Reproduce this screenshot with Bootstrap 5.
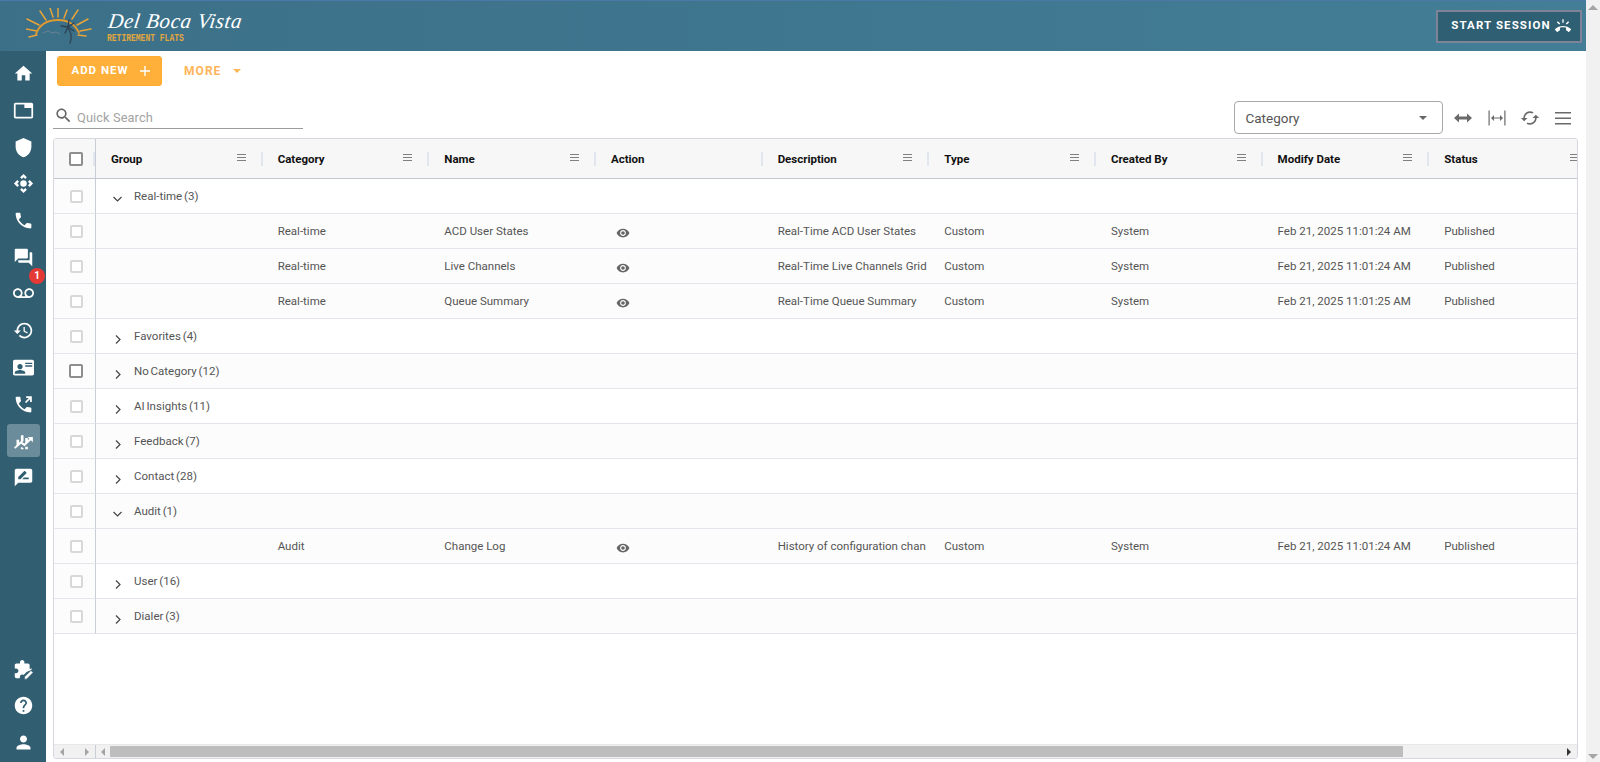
<!DOCTYPE html>
<html lang="en">
<head>
<meta charset="utf-8">
<title>Del Boca Vista</title>
<link href="https://cdn.jsdelivr.net/npm/bootstrap@5.3.0/dist/css/bootstrap.min.css" rel="stylesheet">
<style>
html,body{height:100%;overflow:hidden}
body{font-family:Roboto,"Liberation Sans",sans-serif;font-size:11.5px;color:#555;background:#fff}
.shell{height:762px}
.main-col{width:1586px}
.topbar{height:51px;background:linear-gradient(90deg,#3b7088,#437d96);border-top:1px solid #4a78a8;padding:0 4px 0 26px}
.logo-sun{width:66px;height:36px}
.logo-text{margin-left:15px;color:#fff;line-height:1}
.logo-name{font:italic 21px/20px "Liberation Serif",serif;letter-spacing:.6px;white-space:nowrap;transform:skewX(-8deg);transform-origin:left bottom}
.logo-sub{font:bold 8px/8px "Liberation Mono",monospace;color:#e0a640;text-transform:uppercase;margin-top:3px;transform:scaleY(1.3)}
.start-btn{width:146px;height:33px;background:#2f5f72;border:2px solid #7f8397;border-radius:0;color:#fff;font-weight:700;font-size:11.5px;letter-spacing:1.1px;padding:0 0 0 4px;gap:4px}
.start-btn:hover{background:#2f5f72;color:#fff;border-color:#7f8397}
.side{width:46px;background:#315e70;padding-top:4.5px}
.side-item{width:33px;height:33px;margin:1.85px 7px;border-radius:3px;color:#fff}
.side-item svg{width:21px;height:21px;fill:#fff}
.side-item.on{background:#6b8d9b}
.side-item.last{margin-bottom:3px}
.red-dot{position:absolute;top:-9px;right:-5px;width:16px;height:16px;border-radius:50%;background:#e53935;color:#fff;font-size:10px;font-weight:700;line-height:16px;text-align:center}
.content{padding:5px 8px 3px 7px;min-width:0}
.add-btn{width:105px;height:30px;margin-left:4px;background:#ffb03b;border:1px solid #ffab30;border-radius:3px;color:#fff;font-weight:700;font-size:11.5px;letter-spacing:1px;padding:0 0 0 2px;gap:11px}
.add-btn:hover{background:#ffb03b;color:#fff;border-color:#ffab30}
.more-btn{margin-left:22px;color:#ffb55a;font-weight:700;font-size:12px;letter-spacing:1.05px;gap:12px}
.caret-d{width:0;height:0;border-left:4px solid transparent;border-right:4px solid transparent;border-top:4px solid currentColor}
.tool-row{height:33px;margin-top:15px;margin-bottom:4px}
.search-box{width:250px;height:28px;border-bottom:1px solid #9c9c9c;padding:6px 0 0 1px;gap:4px;align-self:flex-start}
.search-box svg{width:19px;height:19px;fill:#666;flex-shrink:0;margin-top:-4px}
.search-box input{border:0;outline:0;width:200px;padding:0;font-size:12.8px;color:#555;background:transparent;letter-spacing:.1px}
.search-box input::placeholder{color:#a3a3a3;opacity:1}
.cat-select{width:209px;height:33px;border:1px solid #a8a8a8;border-radius:4px;padding:2px 15px 0 10px;font-size:13.5px;color:#555;background:#fff}
.cat-select .caret-d{color:#666;margin-top:-2px}
.tool-icons{margin-left:3px;margin-right:-2px}
.tool-i{width:33.4px;height:24px;color:#6a6a6a}
.tool-i svg{width:20px;height:20px}
.grid-box{border:1px solid #d5d8de;border-radius:3px;min-height:0;background:#fff}
.grid-scroll{overflow:hidden;min-height:0}
.grid-table{table-layout:fixed;width:1542px;margin:0;color:#555;font-size:11.5px;border-collapse:separate;border-spacing:0}
.grid-table th,.grid-table td{height:35px;padding:2px 15px 0;border-bottom:1px solid #e4e6ec;background:#fff;box-shadow:none;white-space:nowrap;overflow:hidden;vertical-align:middle;text-overflow:clip;color:#555}
.grid-table thead th{height:40px;background:#f7f7f7;border-bottom:1px solid #c3c7d1;color:#111;font-weight:700;position:relative;font-size:11.5px;padding-top:2px}
.grid-table th:first-child,.grid-table td:first-child{padding:2px 0 0 3px;text-align:center;border-right:1px solid #c9cdd6}
.grid-table tr.shade td{background:#fcfcfc}
.grid-table tbody td:first-child{background:#fcfcfc}
.grp-cell{word-spacing:-1px}
.hd-menu{position:absolute;right:17px;top:15px;width:9px;height:7px;border-top:1px solid #808080;border-bottom:1px solid #808080}
.hd-menu::after{content:"";position:absolute;left:0;right:0;top:2px;border-top:1px solid #808080}
.grid-table thead th::after{content:"";position:absolute;right:0;top:13px;height:14px;border-right:2px solid #e2e6ee}
.box{display:inline-block;width:13px;height:13px;border:2px solid #d8d8d8;border-radius:2px;background:#fff;vertical-align:middle;margin-top:-2px}
.box.dark{border-color:#8e8e8e;width:14px;height:14px}
.chev{display:inline-block;width:9px;height:6px;margin:4px 12px 0 2px;vertical-align:middle}
.chev.side-c{width:6px;height:9px;margin:4px 13px 0 4px}
.chev path{fill:none;stroke:#444;stroke-width:1.2}
.eye{width:14px;height:14px;fill:#666;margin-left:5px;margin-top:1px}
.hbar{height:14px;background:#f1f1f1;border-top:1px solid #e8e8e8}
.hbar-pin{width:42px;border-right:1px solid #c9cdd6;padding:0 6px}
.arr{width:0;height:0;border-top:4px solid transparent;border-bottom:4px solid transparent}
.arr.l{border-right:4px solid #a5a5a5}
.arr.r{border-left:4px solid #a5a5a5}
.arr.rd{border-left:4px solid #333}
.hbar-track{padding:0 6px 0 5px}
.thumb{width:1293px;height:11px;margin-left:5px;background:#bdbdbd}
.vbar{width:14px;background:#f1f1f1;padding:5px 0 3px}
.arr-u{width:0;height:0;border-left:5px solid transparent;border-right:5px solid transparent;border-bottom:5px solid #a5a5a5}
.arr-d{width:0;height:0;border-left:5px solid transparent;border-right:5px solid transparent;border-top:5px solid #a5a5a5}
</style>
</head>
<body>
<svg width="0" height="0" class="position-absolute">
<defs>
<symbol id="i-home" viewBox="0 0 24 24"><path d="M10 20v-6h4v6h5v-8h3L12 3 2 12h3v8z"/></symbol>
<symbol id="i-tab" viewBox="0 0 24 24"><path d="M21 3H3c-1.1 0-2 .9-2 2v14c0 1.1.9 2 2 2h18c1.1 0 2-.9 2-2V5c0-1.1-.9-2-2-2zm0 16H3V5h10v4h8v10z"/></symbol>
<symbol id="i-shield" viewBox="0 0 24 24"><path d="M12 1L3 5v6c0 5.55 3.84 10.74 9 12 5.16-1.26 9-6.45 9-12V5l-9-4z"/></symbol>
<symbol id="i-cam" viewBox="1 1 22 22"><path d="M15.54 5.54L13.77 7.3 12 5.54 10.23 7.3 8.46 5.54 12 2zm2.92 10l-1.76-1.77L18.46 12l-1.76-1.77 1.76-1.77L22 12zm-10 2.92l1.77-1.76L12 18.46l1.77-1.76 1.77 1.76L12 22zm-2.92-10l1.76 1.77L5.54 12l1.76 1.77-1.76 1.77L2 12z"/><circle cx="12" cy="12" r="3.400"/></symbol>
<symbol id="i-phone" viewBox="0 0 24 24"><path d="M6.62 10.79c1.44 2.83 3.76 5.14 6.59 6.59l2.2-2.2c.27-.27.67-.36 1.02-.24 1.12.37 2.33.57 3.57.57.55 0 1 .45 1 1V20c0 .55-.45 1-1 1-9.39 0-17-7.61-17-17 0-.55.45-1 1-1h3.5c.55 0 1 .45 1 1 0 1.25.2 2.45.57 3.57.11.35.03.74-.25 1.02l-2.2 2.2z"/></symbol>
<symbol id="i-forum" viewBox="0 0 24 24"><path d="M21 6h-2v9H6v2c0 .55.45 1 1 1h11l4 4V7c0-.55-.45-1-1-1zm-4 6V3c0-.55-.45-1-1-1H3c-.55 0-1 .45-1 1v14l4-4h10c.55 0 1-.45 1-1z"/></symbol>
<symbol id="i-vm" viewBox="0 0 24 24"><path d="M18.5 6C15.46 6 13 8.46 13 11.5c0 1.33.47 2.55 1.26 3.5H9.74c.79-.95 1.26-2.17 1.26-3.5C11 8.46 8.54 6 5.5 6S0 8.46 0 11.5 2.46 17 5.5 17h13c3.04 0 5.5-2.46 5.5-5.5S21.54 6 18.5 6zm-13 9C3.57 15 2 13.43 2 11.5S3.57 8 5.5 8 9 9.57 9 11.5 7.43 15 5.5 15zm13 0c-1.93 0-3.5-1.57-3.5-3.5S16.57 8 18.5 8 22 9.57 22 11.5 20.43 15 18.5 15z"/></symbol>
<symbol id="i-hist" viewBox="0 0 24 24"><path d="M13 3c-4.97 0-9 4.03-9 9H1l3.89 3.89.07.14L9 12H6c0-3.87 3.13-7 7-7s7 3.13 7 7-3.13 7-7 7c-1.93 0-3.68-.79-4.94-2.06l-1.42 1.42C8.27 19.99 10.51 21 13 21c4.97 0 9-4.03 9-9s-4.03-9-9-9zm-1 5v5l4.28 2.54.72-1.21-3.5-2.08V8H12z"/></symbol>
<symbol id="i-card" viewBox="0 0 24 24"><path d="M22 3H2C.9 3 0 3.9 0 5v14c0 1.1.9 2 2 2h20c1.1 0 2-.9 2-2V5c0-1.1-.9-2-2-2zM8 8c1.66 0 3 1.34 3 3s-1.34 3-3 3-3-1.34-3-3 1.34-3 3-3zm6 11H2v-1c0-2 4-3.1 6-3.1s6 1.1 6 3.1v1zm8-11h-8V6.500h8V8zm0 3h-8V9.500h8V11z"/></symbol>
<symbol id="i-fwd" viewBox="0 0 24 24"><path d="M6.62 10.79c1.44 2.83 3.76 5.14 6.59 6.59l2.2-2.2c.27-.27.67-.36 1.02-.24 1.12.37 2.33.57 3.57.57.55 0 1 .45 1 1V20c0 .55-.45 1-1 1-9.39 0-17-7.61-17-17 0-.55.45-1 1-1h3.5c.55 0 1 .45 1 1 0 1.25.2 2.45.57 3.57.11.35.03.74-.25 1.02l-2.2 2.2z"/><path d="M15 2.500h6.500V9h-2V5.900l-4.500 4.500-1.400-1.400 4.500-4.500H15z"/></symbol>
<symbol id="i-chart" viewBox="0 0 24 24"><path d="M4 11h3v3.500l-3 3zM9 6h3v6.500l-3 3zM14 9h3v3.800l-3 2.900zM2.500 21.500l-1.300-1.400 7.800-7.600 4 3 5.700-5.600-2-1.900h6v6l-2.300-2.400-7.200 7-4-3zM9 19.500l3 1v1.500H9zM14 19h3v3h-3z"/></symbol>
<symbol id="i-rate" viewBox="0 0 24 24"><path d="M20 2H4c-1.100 0-2 .9-2 2v18l4-4h14c1.100 0 2-.9 2-2V4c0-1.100-.9-2-2-2zM6 14v-2.470l6.880-6.880c.2-.2.510-.2.710 0l1.770 1.770c.2.2.2.510 0 .710L8.470 14H6zm12 0h-7.500l2-2H18v2z"/></symbol>
<symbol id="i-ext" viewBox="0 0 24 24"><path d="M20.500 11H19V7c0-1.100-.9-2-2-2h-4V3.500C13 2.120 11.880 1 10.500 1S8 2.120 8 3.500V5H4c-1.100 0-1.990.9-1.990 2v3.800H3.500c1.490 0 2.700 1.210 2.700 2.700s-1.210 2.700-2.700 2.700H2V20c0 1.100.9 2 2 2h3.800v-1.500c0-1.490 1.210-2.700 2.700-2.700.6 0 1.100.2 1.600.5l3.400-3.400 3-1.400c1.300-.1 3-1 3-2.700S21.880 11 20.500 11z"/><path d="M13 23v-2.500l7.500-7.500 2.500 2.500L15.500 23z" stroke="#315e70" stroke-width=".8"/></symbol>
<symbol id="i-help" viewBox="0 0 24 24"><path d="M12 2C6.480 2 2 6.480 2 12s4.480 10 10 10 10-4.480 10-10S17.520 2 12 2zm1 17h-2v-2h2v2zm2.070-7.750l-.9.920C13.450 12.900 13 13.500 13 15h-2v-.5c0-1.100.450-2.100 1.170-2.830l1.240-1.260c.37-.36.590-.86.590-1.410 0-1.100-.9-2-2-2s-2 .9-2 2H8c0-2.210 1.790-4 4-4s4 1.790 4 4c0 .88-.36 1.680-.93 2.250z"/></symbol>
<symbol id="i-user" viewBox="0 0 24 24"><path d="M12 12c2.210 0 4-1.790 4-4s-1.790-4-4-4-4 1.790-4 4 1.790 4 4 4zm0 2c-2.670 0-8 1.340-8 4v2h16v-2c0-2.660-5.330-4-8-4z"/></symbol>
<symbol id="i-eye" viewBox="0 0 24 24"><path d="M12 4.500C7 4.500 2.730 7.610 1 12c1.730 4.390 6 7.500 11 7.500s9.270-3.110 11-7.500c-1.730-4.390-6-7.500-11-7.500zM12 17c-2.760 0-5-2.240-5-5s2.240-5 5-5 5 2.240 5 5-2.240 5-5 5zm0-8c-1.660 0-3 1.340-3 3s1.340 3 3 3 3-1.340 3-3-1.340-3-3-3z"/></symbol>
<symbol id="i-search" viewBox="0 0 24 24"><path d="M15.500 14h-.79l-.28-.27C15.410 12.590 16 11.110 16 9.500 16 5.910 13.090 3 9.500 3S3 5.910 3 9.500 5.910 16 9.500 16c1.610 0 3.090-.59 4.230-1.570l.27.28v.79l5 4.990L20.490 19l-4.990-5zm-6 0C7.010 14 5 11.990 5 9.500S7.010 5 9.500 5 14 7.010 14 9.500 11.990 14 9.500 14z"/></symbol>
</defs>
</svg>

<div class="shell d-flex">
  <div class="main-col d-flex flex-column">
    <header class="topbar d-flex align-items-center justify-content-between flex-shrink-0">
      <div class="d-flex align-items-center">
        <svg class="logo-sun" viewBox="0 0 66 36" fill="none" stroke-linecap="round">
          <g stroke="#e8a33a" stroke-width="1.500">
            <path d="M0 21l11 2M1 11l12 6M14 3l6 9M24 0l3 9"/><path d="M32 0v9M41 2l-3 8M52 2l-6 9M62 11l-11 6M65 21l-11 2"/>
            <path d="M10 26c4-11 13-14 22-14s17 4 21 13" stroke="#e09a30" stroke-width="1.800"/>
            <path d="M52 27l8 1" /><path d="M3 29l8-2" />
          </g>
          <path d="M44 35c2-5 1-11-2-15" stroke="#33495a" stroke-width="1.500"/>
          <path d="M42 19l-7-1M42 19l-3 6M42 19l6-4M42 19l6 4M42 19l1-7" stroke="#2c4252" stroke-width="1.300"/>
          <path d="M17 25l5-2 4 2 4-1 4 2" stroke="#6a8493" stroke-width="1"/>
        </svg>
        <div class="logo-text">
          <div class="logo-name">Del Boca Vista</div>
          <div class="logo-sub">Retirement Flats</div>
        </div>
      </div>
      <button class="btn start-btn d-flex align-items-center justify-content-center" type="button">START SESSION
        <svg width="16" height="16" viewBox="0 0 24 24" fill="#fff"><path d="M23.710 16.670C20.660 13.780 16.540 12 12 12 7.460 12 3.340 13.780.29 16.670c-.18.18-.29.43-.29.71 0 .28.110.530.29.710l2.480 2.480c.18.18.43.29.71.29.27 0 .52-.11.7-.28.79-.74 1.690-1.360 2.660-1.850.33-.16.56-.5.56-.9v-3.100c1.450-.48 3-.73 4.600-.73s3.150.25 4.600.72v3.100c0 .39.23.74.56.9.98.49 1.870 1.120 2.670 1.850.18.18.43.28.7.28.28 0 .53-.11.71-.29l2.480-2.480c.18-.18.29-.43.29-.71 0-.28-.12-.52-.3-.7zM21.160 6.260l-1.410-1.410-3.560 3.550 1.410 1.410s3.450-3.520 3.560-3.550zM13 2h-2v5h2V2zM6.400 9.810L7.810 8.400 4.260 4.840 2.840 6.260c.11.03 3.560 3.550 3.560 3.550z"/></svg>
      </button>
    </header>
    <div class="d-flex flex-grow-1" style="min-height:0">
      <nav class="side d-flex flex-column flex-shrink-0">
        <a class="side-item d-flex align-items-center justify-content-center"><svg><use href="#i-home"/></svg></a>
        <a class="side-item d-flex align-items-center justify-content-center"><svg><use href="#i-tab"/></svg></a>
        <a class="side-item d-flex align-items-center justify-content-center"><svg><use href="#i-shield"/></svg></a>
        <a class="side-item d-flex align-items-center justify-content-center"><svg><use href="#i-cam"/></svg></a>
        <a class="side-item d-flex align-items-center justify-content-center"><svg><use href="#i-phone"/></svg></a>
        <a class="side-item d-flex align-items-center justify-content-center"><svg><use href="#i-forum"/></svg></a>
        <a class="side-item d-flex align-items-center justify-content-center position-relative"><svg><use href="#i-vm"/></svg><span class="red-dot">1</span></a>
        <a class="side-item d-flex align-items-center justify-content-center"><svg><use href="#i-hist"/></svg></a>
        <a class="side-item d-flex align-items-center justify-content-center"><svg><use href="#i-card"/></svg></a>
        <a class="side-item d-flex align-items-center justify-content-center"><svg><use href="#i-fwd"/></svg></a>
        <a class="side-item on d-flex align-items-center justify-content-center"><svg><use href="#i-chart"/></svg></a>
        <a class="side-item d-flex align-items-center justify-content-center"><svg><use href="#i-rate"/></svg></a>
        <a class="side-item d-flex align-items-center justify-content-center mt-auto"><svg><use href="#i-ext"/></svg></a>
        <a class="side-item d-flex align-items-center justify-content-center"><svg><use href="#i-help"/></svg></a>
        <a class="side-item last d-flex align-items-center justify-content-center"><svg><use href="#i-user"/></svg></a>
      </nav>
      <main class="content d-flex flex-column flex-grow-1">
        <div class="d-flex align-items-center flex-shrink-0">
          <button class="btn add-btn d-flex align-items-center justify-content-center" type="button">ADD NEW
            <svg width="10" height="10" viewBox="0 0 10 10" stroke="#fff" stroke-width="1.400"><path d="M5 0v10M0 5h10"/></svg>
          </button>
          <div class="more-btn d-flex align-items-center">MORE <span class="caret-d"></span></div>
        </div>
        <div class="tool-row d-flex justify-content-between flex-shrink-0">
          <div class="search-box d-flex align-items-center">
            <svg><use href="#i-search"/></svg>
            <input type="text" placeholder="Quick Search" aria-label="Quick Search">
          </div>
          <div class="d-flex align-items-center">
            <div class="cat-select d-flex align-items-center justify-content-between"><span>Category</span><span class="caret-d"></span></div>
            <div class="tool-icons d-flex align-items-center">
              <span class="tool-i d-flex align-items-center justify-content-center"><svg viewBox="0 0 20 20" fill="currentColor"><path d="M1 10l5-4.500v3h8v-3l5 4.500-5 4.500v-3H6v3z"/></svg></span>
              <span class="tool-i d-flex align-items-center justify-content-center"><svg viewBox="0 0 20 20" fill="currentColor"><path d="M1.500 2.500h1.200v15H1.500zM17.300 2.500h1.200v15h-1.200zM4 10l3-3v2.400h6V7l3 3-3 3v-2.400H7V13z"/></svg></span>
              <span class="tool-i d-flex align-items-center justify-content-center"><svg viewBox="0 0 24 24" fill="currentColor"><path transform="rotate(90 12 12)" d="M12 4V1L8 5l4 4V6c3.310 0 6 2.690 6 6 0 1.010-.25 1.970-.7 2.800l1.460 1.460C19.540 15.030 20 13.570 20 12c0-4.420-3.580-8-8-8zm0 14c-3.310 0-6-2.690-6-6 0-1.010.25-1.970.7-2.800L5.240 7.740C4.460 8.970 4 10.430 4 12c0 4.420 3.580 8 8 8v3l4-4-4-4v3z"/></svg></span>
              <span class="tool-i d-flex align-items-center justify-content-center"><svg viewBox="0 0 20 20" fill="currentColor"><path d="M2 4h16v1.500H2zM2 9.500h16V11H2zM2 15h16v1.500H2z"/></svg></span>
            </div>
          </div>
        </div>
        <div class="grid-box d-flex flex-column flex-grow-1 overflow-hidden">
          <div class="grid-scroll flex-grow-1">
            <table class="table grid-table">
              <colgroup><col style="width:42px"><col span="9" style="width:166.67px"></colgroup>
              <thead>
                <tr><th><span class="box dark"></span></th><th>Group<span class="hd-menu"></span></th><th>Category<span class="hd-menu"></span></th><th>Name<span class="hd-menu"></span></th><th>Action</th><th>Description<span class="hd-menu"></span></th><th>Type<span class="hd-menu"></span></th><th>Created By<span class="hd-menu"></span></th><th>Modify Date<span class="hd-menu"></span></th><th>Status<span class="hd-menu"></span></th></tr>
              </thead>
              <tbody>
                <tr><td><span class="box"></span></td><td colspan="9" class="grp-cell"><svg class="chev" viewBox="0 0 9 6"><path d="M.5 1l4 4 4-4"/></svg>Real-time (3)</td></tr>
                <tr class="shade"><td><span class="box"></span></td><td></td><td>Real-time</td><td>ACD User States</td><td><svg class="eye"><use href="#i-eye"/></svg></td><td>Real-Time ACD User States</td><td>Custom</td><td>System</td><td>Feb 21, 2025 11:01:24 AM</td><td>Published</td></tr>
                <tr class="shade"><td><span class="box"></span></td><td></td><td>Real-time</td><td>Live Channels</td><td><svg class="eye"><use href="#i-eye"/></svg></td><td>Real-Time Live Channels Grid</td><td>Custom</td><td>System</td><td>Feb 21, 2025 11:01:24 AM</td><td>Published</td></tr>
                <tr class="shade"><td><span class="box"></span></td><td></td><td>Real-time</td><td>Queue Summary</td><td><svg class="eye"><use href="#i-eye"/></svg></td><td>Real-Time Queue Summary</td><td>Custom</td><td>System</td><td>Feb 21, 2025 11:01:25 AM</td><td>Published</td></tr>
                <tr><td><span class="box"></span></td><td colspan="9" class="grp-cell"><svg class="chev side-c" viewBox="0 0 6 9"><path d="M1 .5l4 4-4 4"/></svg>Favorites (4)</td></tr>
                <tr class="shade"><td><span class="box dark"></span></td><td colspan="9" class="grp-cell"><svg class="chev side-c" viewBox="0 0 6 9"><path d="M1 .5l4 4-4 4"/></svg>No Category (12)</td></tr>
                <tr><td><span class="box"></span></td><td colspan="9" class="grp-cell"><svg class="chev side-c" viewBox="0 0 6 9"><path d="M1 .5l4 4-4 4"/></svg>AI Insights (11)</td></tr>
                <tr class="shade"><td><span class="box"></span></td><td colspan="9" class="grp-cell"><svg class="chev side-c" viewBox="0 0 6 9"><path d="M1 .5l4 4-4 4"/></svg>Feedback (7)</td></tr>
                <tr><td><span class="box"></span></td><td colspan="9" class="grp-cell"><svg class="chev side-c" viewBox="0 0 6 9"><path d="M1 .5l4 4-4 4"/></svg>Contact (28)</td></tr>
                <tr class="shade"><td><span class="box"></span></td><td colspan="9" class="grp-cell"><svg class="chev" viewBox="0 0 9 6"><path d="M.5 1l4 4 4-4"/></svg>Audit (1)</td></tr>
                <tr class="shade"><td><span class="box"></span></td><td></td><td>Audit</td><td>Change Log</td><td><svg class="eye"><use href="#i-eye"/></svg></td><td>History of configuration chan</td><td>Custom</td><td>System</td><td>Feb 21, 2025 11:01:24 AM</td><td>Published</td></tr>
                <tr><td><span class="box"></span></td><td colspan="9" class="grp-cell"><svg class="chev side-c" viewBox="0 0 6 9"><path d="M1 .5l4 4-4 4"/></svg>User (16)</td></tr>
                <tr class="shade"><td><span class="box"></span></td><td colspan="9" class="grp-cell"><svg class="chev side-c" viewBox="0 0 6 9"><path d="M1 .5l4 4-4 4"/></svg>Dialer (3)</td></tr>
              </tbody>
            </table>
          </div>
          <div class="hbar d-flex flex-shrink-0">
            <div class="hbar-pin d-flex align-items-center justify-content-between flex-shrink-0"><span class="arr l"></span><span class="arr r"></span></div>
            <div class="hbar-track d-flex align-items-center flex-grow-1"><span class="arr l"></span><span class="thumb"></span><span class="arr rd ms-auto"></span></div>
          </div>
        </div>
      </main>
    </div>
  </div>
  <div class="vbar d-flex flex-column justify-content-between align-items-center flex-shrink-0"><span class="arr-u"></span><span class="arr-d"></span></div>
</div>
<script src="https://cdn.jsdelivr.net/npm/bootstrap@5.3.0/dist/js/bootstrap.bundle.min.js"></script>
</body>
</html>
